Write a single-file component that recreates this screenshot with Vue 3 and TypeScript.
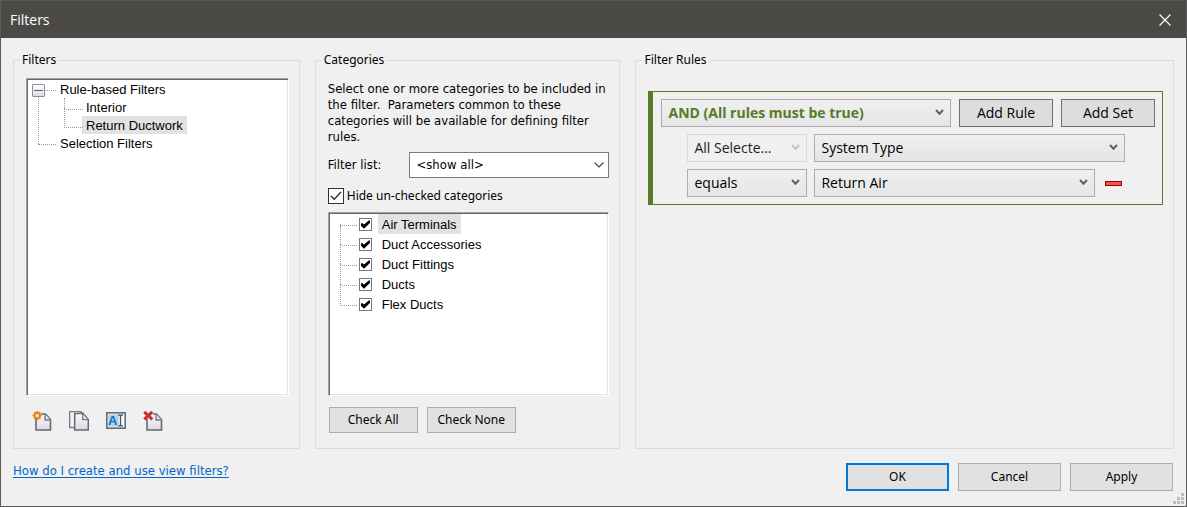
<script setup lang="ts">
import { ref } from 'vue'

interface Category {
  id: string
  name: string
  checked: boolean
}

const filters = [
  { name: 'Rule-based Filters', children: ['Interior', 'Return Ductwork'] },
  { name: 'Selection Filters', children: [] as string[] },
]
const selectedFilter = ref('Return Ductwork')
const expanded = ref(true)

const categories = ref<Category[]>([
  { id: 'air', name: 'Air Terminals', checked: true },
  { id: 'acc', name: 'Duct Accessories', checked: true },
  { id: 'fit', name: 'Duct Fittings', checked: true },
  { id: 'duct', name: 'Ducts', checked: true },
  { id: 'flex', name: 'Flex Ducts', checked: true },
])
const selectedCategory = ref('air')
const hideUnchecked = ref(true)

function setAll(value: boolean): void {
  categories.value.forEach((c) => (c.checked = value))
}
</script>

<template>
  <main class="dialog">
    <header class="titlebar">
      <h1>Filters</h1>
      <button type="button" class="close" aria-label="Close">
        <svg width="12" height="12" viewBox="0 0 12 12"><path d="M.5 .5 11.5 11.5M11.5 .5 .5 11.5" stroke="#fff" stroke-width="1.2" fill="none" /></svg>
      </button>
    </header>

    <div class="groups">
      <fieldset class="group">
        <legend>Filters</legend>
        <ul class="sunken tree">
          <li v-for="f in filters" :key="f.name" class="node">
            <button v-if="f.children.length" type="button" class="expander" aria-label="Toggle" @click="expanded = !expanded"></button>
            <span class="label">{{ f.name }}</span>
            <ul v-if="f.children.length && expanded" class="children">
              <li v-for="c in f.children" :key="c" class="leaf">
                <span class="label" :class="{ selected: c === selectedFilter }" @click="selectedFilter = c">{{ c }}</span>
              </li>
            </ul>
          </li>
        </ul>
        <div class="tools">
          <button type="button" class="tool" aria-label="New">
            <svg width="20" height="20" viewBox="0 0 20 20">
              <defs>
                <linearGradient id="paper" x1="0" y1="0" x2="0" y2="1">
                  <stop offset="0" stop-color="#fbfbfc" />
                  <stop offset="1" stop-color="#d8dae0" />
                </linearGradient>
              </defs>
              <path d="M4 7V19H18.5V8.5L13.5 3H9" fill="url(#paper)" stroke="#666970" stroke-width="1.6" />
              <path d="M13 3V9H18.5" fill="#e4e5e9" stroke="#777a80" stroke-width="1.4" />
              <g stroke="#e8812b" stroke-width="2"><path d="M5.2 0V9.2M.6 4.6H9.8M2 1.4 8.4 7.8M8.4 1.4 2 7.8" /></g>
              <circle cx="5.2" cy="4.6" r="2.6" fill="#fbe0a0" stroke="#e57a18" stroke-width="1.4" />
            </svg>
          </button>
          <button type="button" class="tool" aria-label="Duplicate">
            <svg width="20" height="20" viewBox="0 0 20 20">
              <path d="M5 16.5H.7V.7H12L14 3" fill="#f3f3f5" stroke="#777a80" stroke-width="1.3" />
              <path d="M5.7 2.5H14L19.3 8.5V19H5.7Z" fill="url(#paper)" stroke="#666970" stroke-width="1.5" />
              <path d="M13.7 3V8.7H19" fill="#e4e5e9" stroke="#777a80" stroke-width="1.3" />
            </svg>
          </button>
          <button type="button" class="tool" aria-label="Rename">
            <svg width="20" height="20" viewBox="0 0 20 20">
              <rect x=".8" y="1.8" width="18.4" height="15.4" fill="#f7f8fa" stroke="#5d636c" stroke-width="1.5" />
              <rect x="2.3" y="3.3" width="10.4" height="12.4" fill="#a9d5f1" />
              <text x="2" y="14" class="icon-letter">A</text>
              <path d="M12.2 4H13.7L14.5 4.7 15.3 4H17M14.5 4.5V14.3M12.2 14.8H13.7L14.5 14.2 15.3 14.8H17" stroke="#50565f" stroke-width="1.3" fill="none" />
            </svg>
          </button>
          <button type="button" class="tool" aria-label="Delete">
            <svg width="20" height="20" viewBox="0 0 20 20">
              <path d="M4 8V19H18.5V8.5L13.5 3H10" fill="url(#paper)" stroke="#666970" stroke-width="1.6" />
              <path d="M13 3V9H18.5" fill="#e4e5e9" stroke="#777a80" stroke-width="1.4" />
              <path d="M1.3 .8 9.3 8.4M9.3 .8 1.3 8.4" stroke="#c9302c" stroke-width="3" />
            </svg>
          </button>
        </div>
      </fieldset>

      <fieldset class="group">
        <legend>Categories</legend>
        <p class="intro">Select one or more categories to be included in the filter.&nbsp; Parameters common to these categories will be available for defining filter rules.</p>
        <div class="list-row">
          <label for="filter-list">Filter list:</label>
          <div class="combo list-combo">
            <select id="filter-list"><option>&lt;show all&gt;</option></select>
            <svg width="10" height="6" viewBox="0 0 10 6"><path d="M.5 .5 5 5 9.5 .5" /></svg>
          </div>
        </div>
        <label class="hide-row">
          <span class="tick big">
            <input v-model="hideUnchecked" type="checkbox" />
            <svg v-if="hideUnchecked" width="12" height="10" viewBox="0 0 12 10"><path d="M1 5 4.3 8.3 11 1" fill="none" stroke="#333" stroke-width="1.4" /></svg>
          </span>
          Hide un-checked categories
        </label>
        <ul class="sunken cats">
          <li v-for="c in categories" :key="c.id">
            <span class="tick small">
              <input :id="c.id" v-model="c.checked" type="checkbox" />
              <svg v-if="c.checked" width="9" height="9" viewBox="0 0 9 9"><path d="M0 3.5 1.2 3 3 4.6 8 .3 9 .8V3L3.2 8.6H2.6L0 5.8Z" fill="#000" /></svg>
            </span>
            <label :for="c.id" class="label" :class="{ selected: c.id === selectedCategory }">{{ c.name }}</label>
          </li>
        </ul>
        <div class="checks">
          <button type="button" class="btn" @click="setAll(true)">Check All</button>
          <button type="button" class="btn" @click="setAll(false)">Check None</button>
        </div>
      </fieldset>

      <fieldset class="group">
        <legend>Filter Rules</legend>
        <div class="ruleset">
          <div class="rule-head">
            <div class="combo grow">
              <select class="operator" aria-label="Set operator"><option>AND (All rules must be true)</option></select>
              <svg width="9" height="7" viewBox="0 0 9 7"><path d="M1 1 4.5 4.7 8 1" /></svg>
            </div>
            <button type="button" class="add">Add Rule</button>
            <button type="button" class="add">Add Set</button>
          </div>
          <div class="rule-row">
            <div class="combo key off">
              <select aria-label="Category scope" disabled><option>All Selecte...</option></select>
              <svg width="9" height="7" viewBox="0 0 9 7"><path d="M1 1 4.5 4.7 8 1" /></svg>
            </div>
            <div class="combo grow">
              <select aria-label="Parameter"><option>System Type</option></select>
              <svg width="9" height="7" viewBox="0 0 9 7"><path d="M1 1 4.5 4.7 8 1" /></svg>
            </div>
          </div>
          <div class="rule-row">
            <div class="combo key">
              <select aria-label="Comparison"><option>equals</option></select>
              <svg width="9" height="7" viewBox="0 0 9 7"><path d="M1 1 4.5 4.7 8 1" /></svg>
            </div>
            <div class="combo grow">
              <select aria-label="Value"><option>Return Air</option></select>
              <svg width="9" height="7" viewBox="0 0 9 7"><path d="M1 1 4.5 4.7 8 1" /></svg>
            </div>
            <button type="button" class="remove" aria-label="Remove rule"></button>
          </div>
        </div>
      </fieldset>
    </div>

    <footer class="footer">
      <a href="#help">How do I create and use view filters?</a>
      <div class="actions">
        <button type="button" class="btn default">OK</button>
        <button type="button" class="btn">Cancel</button>
        <button type="button" class="btn">Apply</button>
      </div>
    </footer>
    <svg class="grip" width="11" height="11" viewBox="0 0 11 11" fill="#bdbdbd">
      <path d="M8 0h3v3h-3zM4 4h3v3h-3zM8 4h3v3h-3zM0 8h3v3h-3zM4 8h3v3h-3zM8 8h3v3h-3z" />
    </svg>
  </main>
</template>

<style>
body {
  margin: 0;
  background: #f0f0f0;
}
</style>

<style scoped>
* {
  box-sizing: border-box;
}
.dialog {
  position: relative;
  display: flex;
  flex-direction: column;
  min-height: 100vh;
  border: 1px solid #5b5a58;
  background: #f0f0f0;
  color: #000;
  font: 12px/16px "Noto Sans", sans-serif;
}
button,
select,
input {
  margin: 0;
  font: inherit;
  color: inherit;
}
ul {
  margin: 0;
  padding: 0;
  list-style: none;
}
.titlebar {
  display: flex;
  justify-content: space-between;
  align-items: center;
  height: 37px;
  padding: 0 15px 0 9px;
  background: #4b4a47;
  color: #fff;
}
h1 {
  margin: 0;
  font: 14px/20px "Open Sans", sans-serif;
}
.close {
  display: flex;
  padding: 0;
  border: 0;
  background: none;
}
.groups {
  flex: 1;
  display: grid;
  grid-template-columns: 287fr 306fr 539fr;
  gap: 15px;
  padding: 14px 12px 0;
}
.group {
  display: flex;
  flex-direction: column;
  min-width: 0;
  margin: 0;
  padding: 10px 10px 14px 12px;
  border: 1px solid #dcdcdc;
}
legend {
  margin-left: -6px;
  padding: 0 2px;
}
.sunken {
  flex: 1;
  padding: 1px;
  border: 1px solid;
  border-color: #a0a0a0 #fff #fff #a0a0a0;
  background: #fff;
  box-shadow: inset 1px 1px #696969, inset -1px -1px #e3e3e3;
  font: 13px/18px "Liberation Sans", Arial, sans-serif;
}
.label {
  display: inline-block;
  height: 18px;
  padding: 0 4px;
  line-height: 20px;
  vertical-align: top;
}
.selected {
  background: #e2e2e2;
}
.node {
  position: relative;
  padding-left: 28px;
}
.node::before {
  content: "";
  position: absolute;
  left: 10px;
  top: 10px;
  width: 18px;
  border-top: 1px dotted #999;
}
.node:first-child::after {
  content: "";
  position: absolute;
  left: 10px;
  top: 10px;
  bottom: -10px;
  border-left: 1px dotted #999;
}
.expander {
  position: absolute;
  z-index: 1;
  left: 4px;
  top: 4px;
  width: 13px;
  height: 13px;
  padding: 0;
  border: 1px solid #919191;
  border-radius: 1px;
  background: linear-gradient(#4b63a7, #4b63a7) center / 9px 1px no-repeat, linear-gradient(#fff, #ddd);
}
.leaf {
  position: relative;
  padding-left: 26px;
}
.leaf::before {
  content: "";
  position: absolute;
  left: 8px;
  top: -8px;
  width: 18px;
  height: 19px;
  border: 1px dotted #999;
  border-width: 0 0 1px 1px;
}
.leaf:first-child::before {
  top: 0;
  height: 11px;
}
.tools {
  display: flex;
  gap: 17px;
  height: 38px;
  padding: 15px 6px 0;
}
.tool {
  width: 20px;
  height: 20px;
  padding: 0;
  border: 0;
  background: none;
}
.tool svg {
  display: block;
}
.icon-letter {
  font: bold 13px "Liberation Sans", sans-serif;
  fill: #1c6fb8;
}
.intro,
.list-row,
.footer a {
  font: 13px/16px "DejaVu Sans Condensed", sans-serif;
}
.intro {
  margin: 3px 0 7px;
}
.list-row {
  display: flex;
  justify-content: space-between;
  align-items: center;
}
.combo {
  position: relative;
  display: flex;
  min-width: 0;
}
.combo select {
  width: 100%;
  height: 28px;
  padding: 0 20px 0 6px;
  appearance: none;
  border: 1px solid #acacac;
  border-radius: 0;
  background: linear-gradient(#f0f0f0, #e5e5e5);
  font: 14px/20px "Open Sans", sans-serif;
}
.combo svg {
  position: absolute;
  right: 7px;
  top: 10px;
  pointer-events: none;
  fill: none;
  stroke: #606060;
  stroke-width: 2;
}
.list-combo {
  width: 200px;
}
.combo.list-combo select {
  height: 26px;
  border-color: #7a7a7a;
  background: #fff;
  font: inherit;
}
.combo.list-combo svg {
  right: 5px;
  stroke: #444;
  stroke-width: 1.1;
}
.hide-row {
  display: flex;
  align-items: center;
  gap: 3px;
  margin: 10px 0 8px;
}
.tick {
  position: relative;
  display: flex;
  flex: none;
}
.tick input {
  width: 100%;
  height: 100%;
  appearance: none;
  border: 1px solid #333;
  background: #fff;
}
.tick svg {
  position: absolute;
  left: 2px;
  top: 2px;
  pointer-events: none;
}
.big {
  width: 16px;
  height: 16px;
}
.big svg {
  top: 3px;
}
.small {
  width: 13px;
  height: 13px;
}
.small input {
  border-color: #777;
}
.cats li {
  position: relative;
  display: flex;
  align-items: center;
  gap: 6px;
  height: 20px;
  padding-left: 29px;
}
.cats li::before {
  content: "";
  position: absolute;
  left: 10px;
  top: -10px;
  width: 16px;
  height: 21px;
  border: 1px dotted #999;
  border-width: 0 0 1px 1px;
}
.cats li:first-child::before {
  top: 10px;
  height: 1px;
}
.cats .label {
  height: 20px;
  line-height: 22px;
}
.checks {
  display: flex;
  gap: 9px;
  padding: 11px 1px 1px;
}
.btn {
  width: 89px;
  height: 26px;
  padding: 0;
  border: 1px solid #adadad;
  background: #e1e1e1;
}
.ruleset {
  display: flex;
  flex-direction: column;
  gap: 7px;
  margin-top: 13px;
  padding: 7px 7px 7px 8px;
  border: 1px solid #577b27;
  border-left-width: 5px;
}
.rule-head,
.rule-row {
  display: flex;
  align-items: center;
  gap: 7px;
}
.rule-head {
  gap: 8px;
}
.rule-row {
  padding: 0 30px 0 26px;
}
.grow {
  flex: 1;
}
.key {
  width: 120px;
}
.combo .operator {
  color: #577b27;
  font-weight: bold;
}
.off select {
  border-color: #d9d9d9;
  background: #f0f0f0;
  color: #222;
  opacity: 1;
}
.off svg {
  stroke: #c4c4c4;
}
.add {
  width: 94px;
  height: 28px;
  padding: 0;
  border: 1px solid #707070;
  background: #ddd;
  font: 14px/20px "Open Sans", sans-serif;
}
.remove {
  width: 17px;
  height: 5px;
  margin: 0 3px;
  padding: 0;
  border: 1px solid #900;
  background: #f0564a;
}
.footer {
  display: flex;
  justify-content: space-between;
  align-items: flex-start;
  padding: 14px 13px 15px 12px;
}
.footer a {
  color: #0066cc;
  text-underline-offset: 2px;
}
.actions {
  display: flex;
  gap: 9px;
}
.actions .btn {
  width: 103px;
  height: 28px;
}
.actions .default {
  border: 2px solid #0078d7;
}
.grip {
  position: absolute;
  right: 2px;
  bottom: 2px;
}
</style>
